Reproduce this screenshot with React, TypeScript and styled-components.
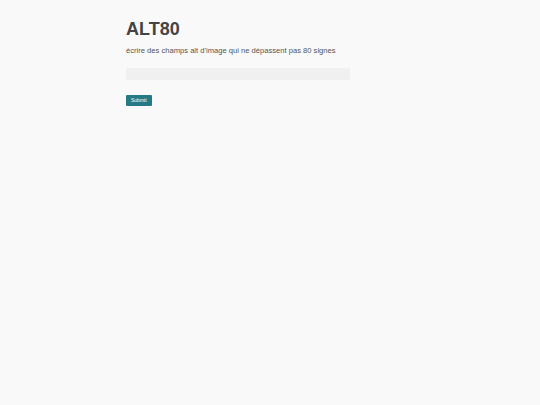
import { useState } from "react";
import styled, { createGlobalStyle } from "styled-components";

const GlobalStyle = createGlobalStyle`
  html, body {
    margin: 0;
    padding: 0;
    background: #f9f9f9;
    font-family: "Liberation Sans", Arial, sans-serif;
    color: #444;
  }
`;

const Page = styled.div`
  min-height: 405px;
  background: #f9f9f9;
`;

const Container = styled.main`
  width: 288px;
  margin: 0 auto;
  padding-top: 18px;
  display: flex;
  flex-direction: column;
`;

const Title = styled.h1`
  margin: 0;
  font-size: 18px;
  line-height: 22px;
  font-weight: 700;
  color: #444;
`;

const Lead = styled.p`
  margin: 6px 0 0;
  font-size: 7.6px;
  line-height: 10px;
  color: #555;
`;

const Form = styled.form`
  display: flex;
  flex-direction: column;
  align-items: flex-start;
  margin-top: 12px;
`;

const Field = styled.input`
  box-sizing: border-box;
  width: 224px;
  height: 12px;
  border: none;
  background: #f0f0f0;
  padding: 0 4px;
  font-family: inherit;
  font-size: 7px;
  outline: none;
`;

const Submit = styled.button`
  margin-top: 15px;
  height: 11px;
  padding: 0 5px;
  border: none;
  border-radius: 1px;
  background: #267a85;
  color: #fff;
  font-family: inherit;
  font-size: 5px;
  line-height: 11px;
  cursor: pointer;
`;

export default function App() {
  const [alt, setAlt] = useState("");

  return (
    <Page>
      <GlobalStyle />
      <Container>
        <Title>ALT80</Title>
        <Lead>écrire des champs alt d'image qui ne dépassent pas 80 signes</Lead>
        <Form onSubmit={(e) => e.preventDefault()}>
          <Field
            type="text"
            maxLength={80}
            value={alt}
            onChange={(e) => setAlt(e.target.value)}
          />
          <Submit type="submit">Submit</Submit>
        </Form>
      </Container>
    </Page>
  );
}
